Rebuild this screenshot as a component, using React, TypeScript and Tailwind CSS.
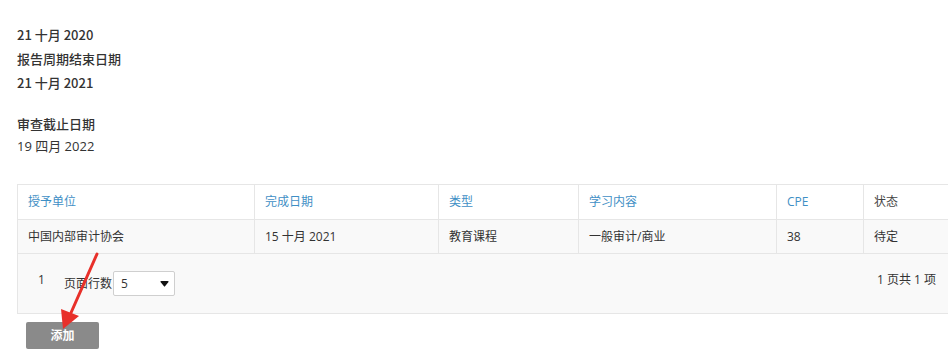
const columns = [
  { label: '授予单位', blue: true },
  { label: '完成日期', blue: true },
  { label: '类型', blue: true },
  { label: '学习内容', blue: true },
  { label: 'CPE', blue: true },
  { label: '状态', blue: false },
]

const row = ['中国内部审计协会', '15 十月 2021', '教育课程', '一般审计/商业', '38', '待定']

const gridCols = 'grid grid-cols-[237px_184px_140px_198px_87px_99px]'

function ArrowMark() {
  // red annotation arrow drawn over the page
  return (
    <svg
      className="absolute left-0 top-0 pointer-events-none"
      width="948"
      height="362"
      viewBox="0 0 948 362">
      <line x1="97" y1="254" x2="70" y2="315" stroke="#e8302a" strokeWidth="3" strokeLinecap="round" />
      <polygon points="63,329 61,309 79,316" fill="#e8302a" />
    </svg>
  )
}

export default function App() {
  return (
    <div
      className="relative w-[948px] h-[362px] overflow-hidden bg-white text-[#333]"
      style={{ fontFamily: '"Open Sans", "Noto Sans CJK SC", sans-serif' }}>
      <div className="pl-[17px] pt-[23px]">
        <div
          className="text-[13px] leading-[24px] font-medium"
          style={{ fontFamily: '"Noto Sans CJK SC", sans-serif' }}>
          <p>21 十月 2020</p>
          <p>报告周期结束日期</p>
          <p>21 十月 2021</p>
        </div>
        <div className="mt-[17px] text-[13px] leading-[23px]">
          <p className="font-medium" style={{ fontFamily: '"Noto Sans CJK SC", sans-serif' }}>
            审查截止日期
          </p>
          <p>19 四月 2022</p>
        </div>
      </div>

      <div className="ml-[17px] mt-[26px] w-[945px] border-t border-l border-[#e6e6e6] text-[12px]">
        <div className={`${gridCols} h-[35px] bg-white border-b border-[#e6e6e6]`}>
          {columns.map(col => (
            <div
              key={col.label}
              className={`flex items-center px-[10px] border-r border-[#e6e6e6] ${col.blue ? 'text-[#3f8fc5]' : 'text-[#444]'}`}>
              {col.label}
            </div>
          ))}
        </div>
        <div className={`${gridCols} h-[34px] bg-[#f9f9f9] border-b border-[#e6e6e6]`}>
          {row.map((cell, i) => (
            <div key={i} className="flex items-center px-[10px] border-r border-[#e6e6e6]">
              {cell}
            </div>
          ))}
        </div>
        <div className="h-[60px] bg-[#f9f9f9] border-b border-[#e6e6e6] flex items-start justify-between pl-[20px] pr-[12px]">
          <div className="flex items-center pt-[17px]">
            <span className="text-[12px] leading-[18px] -mt-[8px]">1</span>
            <span className="ml-[19px] text-[12px]">页面行数</span>
            <div className="ml-[1px] w-[62px] h-[25px] bg-white border border-[#cfcfcf] rounded-[2px] flex items-center justify-between pl-[7px] pr-[5px]">
              <span className="text-[12px]">5</span>
              <svg width="9" height="6" viewBox="0 0 9 6">
                <path d="M0.5 1 Q0 0 1.5 0 L7.5 0 Q9 0 8.5 1 L5 5.3 Q4.5 6 4 5.3 Z" fill="#111" />
              </svg>
            </div>
          </div>
          <span className="pt-[17px] pr-[14px] text-[12px] leading-[18px]">1 页共 1 项</span>
        </div>
      </div>

      <button
        type="button"
        className="ml-[26px] mt-[8px] w-[73px] h-[27px] bg-[#8a8a8a] rounded-[2px] text-white text-[12px] font-bold flex items-center justify-center">
        添加
      </button>

      <ArrowMark />
    </div>
  )
}
